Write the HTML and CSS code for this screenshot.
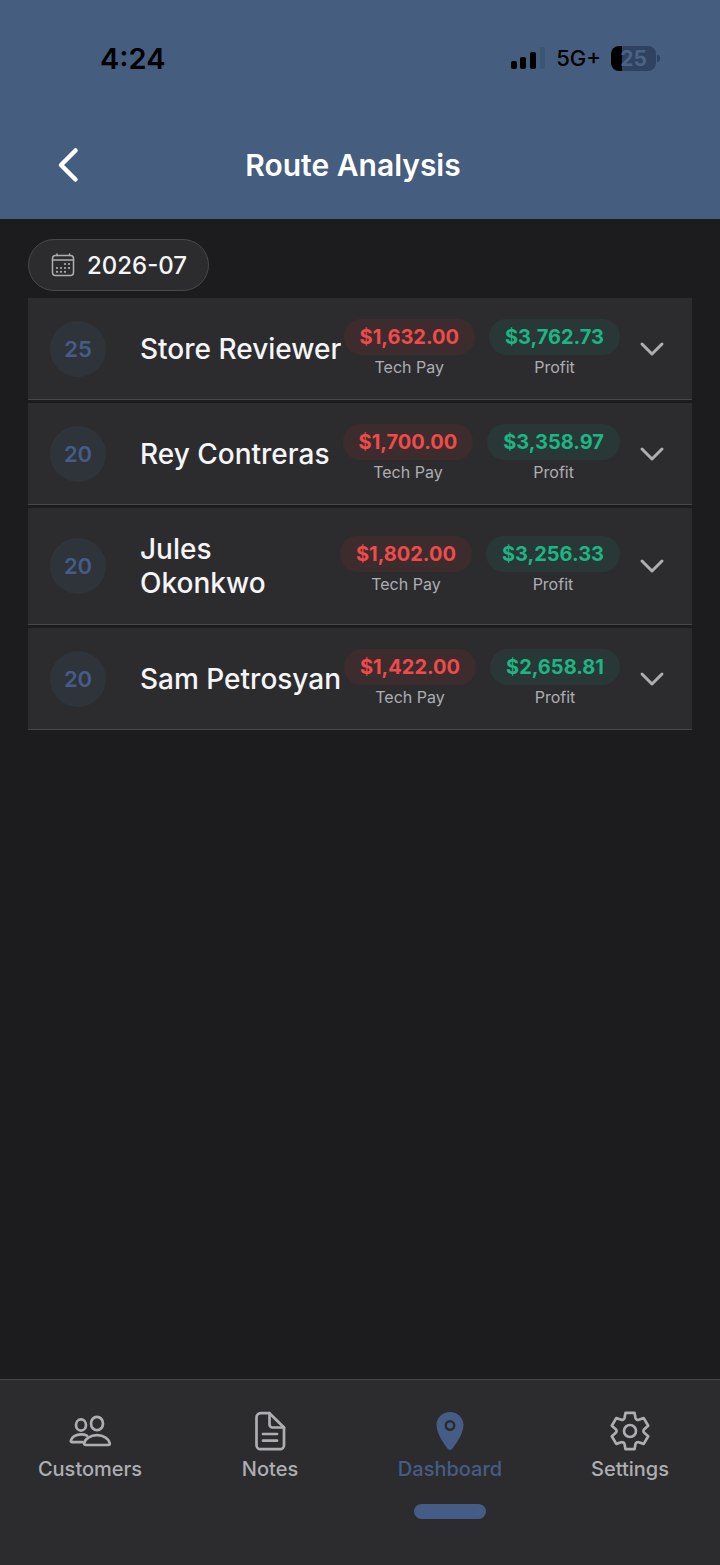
FILE: index.html
```html
<!DOCTYPE html>
<html lang="en">
<head>
  <meta charset="UTF-8" />
  <meta name="viewport" content="width=device-width, initial-scale=1.0"/>
  <title>Route Analysis</title>
  <link rel="stylesheet" href="styles.css">
</head>
<body>

  <header class="header">
    <div class="status-bar">
      <span class="time">4:24</span>
      <div class="status-icons">
        <svg width="36" height="24" viewBox="0 0 36 24">
          <rect x="1" y="15" width="6" height="8" rx="2"/>
          <rect x="10" y="11" width="6" height="12" rx="2"/>
          <rect x="20" y="6" width="6" height="17" rx="2"/>
          <rect x="30" y="1" width="5" height="22" rx="2" fill="#3a5670"/>
        </svg>
        <span class="network">5G+</span>
        <div class="battery"><span>25</span></div>
      </div>
    </div>
    <div class="title-bar">
      <button class="back" aria-label="Back">
        <svg width="24" height="36" viewBox="0 0 24 36" fill="none" stroke="#fff" stroke-width="4.500" stroke-linecap="round" stroke-linejoin="round">
          <path d="M19.500 3.500 5 18l14.500 14.500"/>
        </svg>
      </button>
      <h1>Route Analysis</h1>
    </div>
  </header>

  <main class="content">
    <button class="month">
      <svg width="24" height="24" viewBox="0 0 24 24" fill="none" stroke="#aeaeb2" stroke-width="1.5" stroke-linecap="round">
        <rect x="1.500" y="2.500" width="21" height="20" rx="3"/>
        <path d="M1.500 7h21M6 1v1.500M18.500 1v1.500"/>
        <path stroke-width="2.200" d="M14 11h.01M18 11h.01M6 15h.01M10 15h.01M14 15h.01M18 15h.01M6 18.800h.01M10 18.800h.01M14 18.800h.01"/>
      </svg>
      2026-07
    </button>

    <ul class="routes">
      <li class="route">
        <span class="count">25</span>
        <h2>Store Reviewer</h2>
        <div class="stats">
          <div class="stat"><span class="amount pay">$1,632.00</span><span class="label">Tech Pay</span></div>
          <div class="stat"><span class="amount profit">$3,762.73</span><span class="label">Profit</span></div>
        </div>
        <button class="expand" aria-label="Show Store Reviewer">
          <svg width="26" height="16" viewBox="0 0 26 16"><path d="M3 3l10 10L23 3"/></svg>
        </button>
      </li>
      <li class="route">
        <span class="count">20</span>
        <h2>Rey Contreras</h2>
        <div class="stats">
          <div class="stat"><span class="amount pay">$1,700.00</span><span class="label">Tech Pay</span></div>
          <div class="stat"><span class="amount profit">$3,358.97</span><span class="label">Profit</span></div>
        </div>
        <button class="expand" aria-label="Show Rey Contreras">
          <svg width="26" height="16" viewBox="0 0 26 16"><path d="M3 3l10 10L23 3"/></svg>
        </button>
      </li>
      <li class="route">
        <span class="count">20</span>
        <h2>Jules Okonkwo</h2>
        <div class="stats">
          <div class="stat"><span class="amount pay">$1,802.00</span><span class="label">Tech Pay</span></div>
          <div class="stat"><span class="amount profit">$3,256.33</span><span class="label">Profit</span></div>
        </div>
        <button class="expand" aria-label="Show Jules Okonkwo">
          <svg width="26" height="16" viewBox="0 0 26 16"><path d="M3 3l10 10L23 3"/></svg>
        </button>
      </li>
      <li class="route">
        <span class="count">20</span>
        <h2>Sam Petrosyan</h2>
        <div class="stats">
          <div class="stat"><span class="amount pay">$1,422.00</span><span class="label">Tech Pay</span></div>
          <div class="stat"><span class="amount profit">$2,658.81</span><span class="label">Profit</span></div>
        </div>
        <button class="expand" aria-label="Show Sam Petrosyan">
          <svg width="26" height="16" viewBox="0 0 26 16"><path d="M3 3l10 10L23 3"/></svg>
        </button>
      </li>
    </ul>
  </main>

  <nav class="tabs">
    <a href="#customers">
      <svg width="42" height="40" viewBox="0 0 42 40" fill="none" stroke="currentColor" stroke-width="2.700" stroke-linecap="round" stroke-linejoin="round">
        <ellipse cx="12" cy="14" rx="5" ry="5.6"/>
        <ellipse cx="28" cy="12.5" rx="6" ry="6.7"/>
        <path d="M28 24.2c-6.500 0-12.300 3.600-12.800 8.300-.1 1 .5 1.500 1.500 1.500h22.600c1 0 1.600-.5 1.500-1.500-.5-4.700-6.300-8.300-12.800-8.300z"/>
        <path d="M18 24.600c-1.700-.9-3.700-1.300-6-1.300-5 0-9.600 2.700-10.200 6.400-.2 1 .4 1.500 1.400 1.500h10.300"/>
      </svg>
      Customers
    </a>
    <a href="#notes">
      <svg width="40" height="40" viewBox="0 0 40 40" fill="none" stroke="currentColor" stroke-width="2.700" stroke-linecap="round" stroke-linejoin="round">
        <path d="M19.500 2.200h-9a4 4 0 0 0-4 4v28a4 4 0 0 0 4 4h19.500a4 4 0 0 0 4-4V16.500z"/>
        <path d="M19.500 2.200v11.300a3 3 0 0 0 3 3H34M13 23h14M13 29.700h14"/>
      </svg>
      Notes
    </a>
    <a href="#dashboard" class="active">
      <svg width="40" height="40" viewBox="0 0 40 40" fill="currentColor">
        <path fill-rule="evenodd" d="M20 1C12.500 1 6.500 6.700 6.500 14c0 9 8.500 20.500 11.700 24.200 1 1.100 2.600 1.100 3.600 0C25 34.500 33.500 23 33.500 14 33.500 6.700 27.500 1 20 1zm0 8a5.500 5.500 0 1 1 0 11 5.500 5.500 0 0 1 0-11z"/>
        <circle cx="20" cy="14.500" r="3"/>
      </svg>
      Dashboard
    </a>
    <a href="#settings">
      <svg width="40" height="40" viewBox="0 0 40 40" fill="none" stroke="currentColor" stroke-width="2.700" stroke-linejoin="round">
        <path d="M15.500 1.800h9l1 5.200c.3 1.300 1.900 2.200 3.200 1.800l5-1.700 4.500 7.700-4 3.500c-1 .9-1 2.500 0 3.400l4 3.500-4.500 7.700-5-1.700c-1.300-.4-2.900.5-3.200 1.800l-1 5.200h-9l-1-5.200c-.3-1.300-1.900-2.200-3.200-1.800l-5 1.700-4.500-7.700 4-3.500c1-.9 1-2.500 0-3.400l-4-3.500 4.500-7.700 5 1.700c1.300.4 2.900-.5 3.200-1.800z"/>
        <circle cx="20" cy="20" r="6"/>
      </svg>
      Settings
    </a>
  </nav>

</body>
</html>
```
FILE: styles.css
```css
body {
  font-family: Inter, sans-serif;
  margin: 0;
  background: #1c1c1e;
  color: #f5f5f7;
  display: flex;
  flex-direction: column;
  min-height: 100vh;
}

button {
  font-family: inherit;
  color: inherit;
  background: none;
  border: none;
  padding: 0;
  cursor: pointer;
}

svg {
  display: block;
}

.header {
  background: #455d7e;
  padding: 35px 28px 26px;
}

.status-bar {
  display: flex;
  justify-content: space-between;
  align-items: center;
  height: 46px;
  padding: 0 36px 0 72px;
  color: #000;
}

.time {
  font-size: 29px;
  font-weight: 600;
}

.status-icons {
  display: flex;
  align-items: center;
  gap: 10px;
}

.network {
  font-size: 22px;
  font-weight: 500;
}

.battery {
  position: relative;
  width: 45px;
  height: 25px;
  border-radius: 8px;
  background: linear-gradient(to right, #000 11px, #2f4261 11px);
  color: #4c6285;
  font-size: 21px;
  font-weight: 700;
  line-height: 25px;
  text-align: center;
}

.battery::after {
  content: "";
  position: absolute;
  right: -4px;
  top: 9px;
  width: 3px;
  height: 7px;
  border-radius: 0 3px 3px 0;
  background: #2f4261;
}

.title-bar {
  display: grid;
  grid-template-columns: 80px 1fr 94px;
  align-items: center;
  margin-top: 56px;
  height: 56px;
}

.title-bar h1 {
  margin: 0;
  font-size: 30px;
  font-weight: 600;
  text-align: center;
  color: #fff;
}

.back {
  display: flex;
  justify-content: center;
}

.content {
  flex: 1;
  padding: 20px 28px;
}

.month {
  display: flex;
  align-items: center;
  gap: 12px;
  height: 52px;
  padding: 0 21px 0 22px;
  font-size: 24px;
  font-weight: 500;
  background: #2c2c2e;
  border: 1px solid #48484a;
  border-radius: 26px;
}

.routes {
  list-style: none;
  margin: 7px 0 0;
  padding: 0;
  display: flex;
  flex-direction: column;
  gap: 3px;
}

.route {
  display: flex;
  align-items: center;
  box-sizing: border-box;
  min-height: 102px;
  padding: 20px 27px 20px 22px;
  background: #2c2c2e;
  border-bottom: 1px solid #48484a;
}

.count {
  flex: none;
  width: 56px;
  height: 56px;
  border-radius: 50%;
  background: #2f343a;
  color: #455d86;
  font-size: 22px;
  font-weight: 600;
  line-height: 56px;
  text-align: center;
}

.route h2 {
  flex: 1;
  margin: 0 0 0 34px;
  padding: 4px 0;
  font-size: 28px;
  font-weight: 500;
  line-height: 34px;
}

.stats {
  display: flex;
  gap: 14px;
}

.stat {
  display: flex;
  flex-direction: column;
  align-items: center;
}

.amount {
  padding: 0 16px;
  border-radius: 18px;
  font-size: 20px;
  font-weight: 700;
  line-height: 36px;
}

.pay {
  background: #3d2c2e;
  color: #ef4b4b;
}

.profit {
  background: #293836;
  color: #1db583;
}

.label {
  font-size: 16px;
  line-height: 24px;
  color: #aeaeb2;
}

.expand {
  margin-left: 19px;
}

.expand path {
  fill: none;
  stroke: #aeaeb2;
  stroke-width: 3;
  stroke-linecap: round;
  stroke-linejoin: round;
}

.tabs {
  display: grid;
  grid-template-columns: repeat(4, 1fr);
  height: 185px;
  background: #2c2c2e;
  border-top: 1px solid #48484a;
}

.tabs a {
  display: flex;
  flex-direction: column;
  align-items: center;
  padding-top: 31px;
  font-size: 20px;
  font-weight: 500;
  line-height: 36px;
  color: #aeaeb2;
  text-decoration: none;
}

.tabs .active {
  color: #455d86;
}

.tabs .active::after {
  content: "";
  width: 72px;
  height: 15px;
  margin-top: 17px;
  border-radius: 8px;
  background: #455d86;
}
```
